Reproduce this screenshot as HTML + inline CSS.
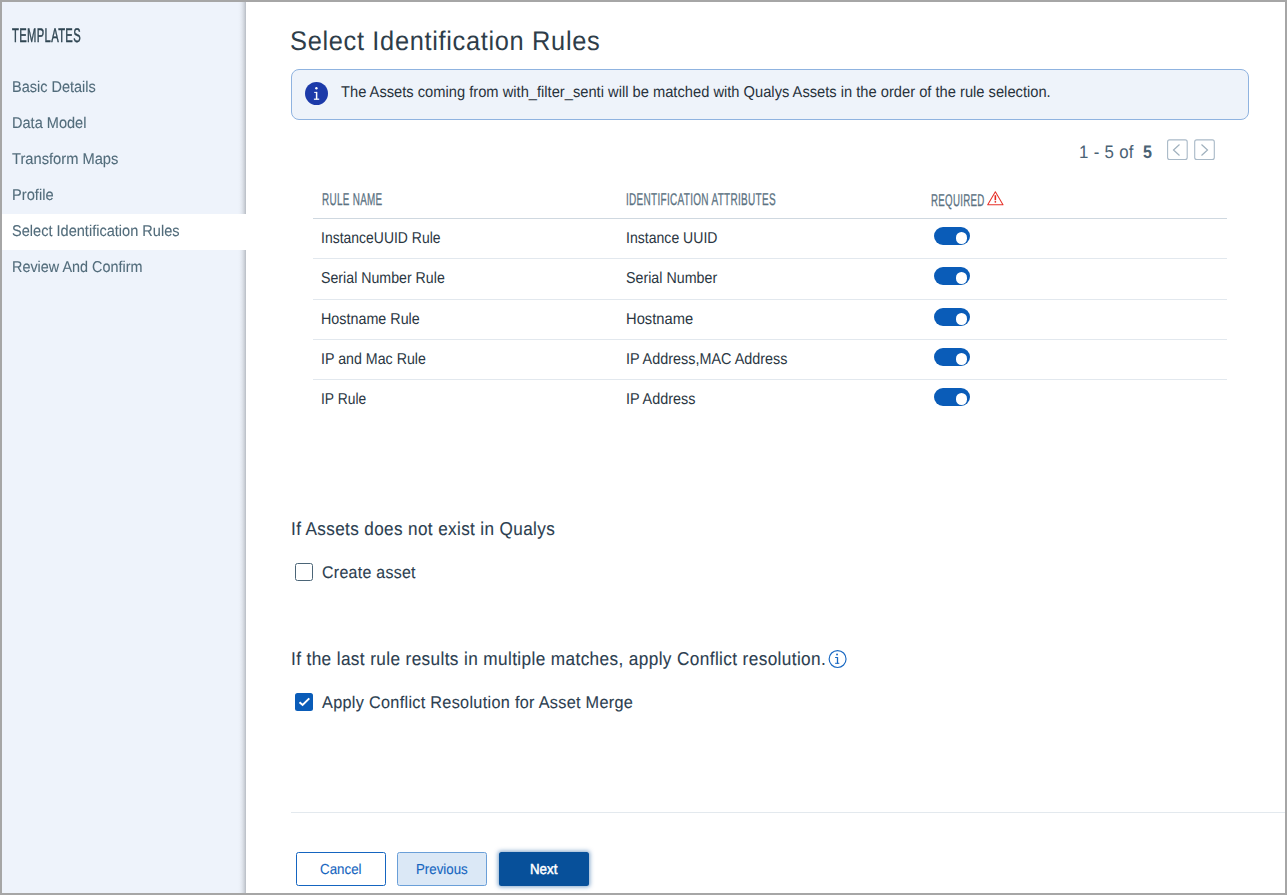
<!DOCTYPE html>
<html lang="en">
<head>
<meta charset="utf-8">
<title>Select Identification Rules</title>
<style>
*{box-sizing:border-box;margin:0;padding:0}
html,body{width:1287px;height:895px;overflow:hidden;background:#a6a6a6}
body{position:relative;font-family:"Liberation Sans",sans-serif}
.abs{position:absolute}
.t{position:absolute;display:block;white-space:pre;line-height:1;font-weight:400;font-style:normal;text-decoration:none;transform-origin:0 0}
#app{position:absolute;left:2px;top:2px;width:1283px;height:891px;background:#fff}
#side{position:absolute;left:2px;top:2px;width:244px;height:891px;background:#eef3fb}
#sideshadow{position:absolute;left:238px;top:2px;width:8px;height:891px;background:linear-gradient(to right,rgba(50,55,60,0) 0,rgba(50,55,60,.02) 25%,rgba(50,55,60,.07) 50%,rgba(50,55,60,.16) 75%,rgba(50,55,60,.29) 100%)}
#sidetext{position:absolute;left:0;top:0;width:246px;height:895px;will-change:transform}
#sel{position:absolute;left:2px;top:214px;width:244px;height:36px;background:#fff}
#infobox{position:absolute;left:291px;top:69px;width:958px;height:51px;background:#eef3fa;border:1px solid #8fb3e0;border-radius:8px}
#infoic{position:absolute;left:305px;top:82px;width:23px;height:23px;border-radius:50%;background:#1c3aa9}
.hl{position:absolute;left:313px;width:914px;height:1px}
.tog{position:absolute;left:934px;width:36px;height:18px;border-radius:9px;background:#0a5cb8}
.tog i{position:absolute;left:21.6px;top:5.2px;width:11.8px;height:11.8px;border-radius:50%;background:#fff}
.cb{position:absolute;left:295px;width:18px;height:18px;border-radius:2.5px}
.btn{position:absolute;top:852px;width:90px;height:34px;border-radius:2.5px}
#tpl{left:11.6px;top:25px;font-size:19.7px;color:#2f4552;letter-spacing:0.6px;-webkit-text-stroke:0.45px #2f4552;transform:translateY(0.83px) scaleX(0.5703) skewX(0.05deg);}
#n1{left:11.9px;top:79px;font-size:15.6px;color:#526c7b;-webkit-text-stroke:0.1px #526c7b;transform:scaleX(0.9295) skewX(0.05deg);}
#n2{left:12.1px;top:115px;font-size:15.6px;color:#526c7b;-webkit-text-stroke:0.1px #526c7b;transform:scaleX(0.9334) skewX(0.05deg);}
#n3{left:11.75px;top:151px;font-size:15.6px;color:#526c7b;-webkit-text-stroke:0.1px #526c7b;transform:scaleX(0.9419) skewX(0.05deg);}
#n4{left:11.85px;top:187px;font-size:15.6px;color:#526c7b;-webkit-text-stroke:0.1px #526c7b;transform:scaleX(0.9408) skewX(0.05deg);}
#n5{left:12.16px;top:223px;font-size:15.6px;color:#526c7b;-webkit-text-stroke:0.1px #526c7b;transform:scaleX(0.9336) skewX(0.05deg);}
#n6{left:11.85px;top:259px;font-size:15.6px;color:#526c7b;-webkit-text-stroke:0.1px #526c7b;transform:scaleX(0.9231) skewX(0.05deg);}
#title{left:290.19px;top:28.2px;font-size:27px;color:#2e3d49;letter-spacing:0.7px;transform:scaleX(0.9417) skewX(0.05deg);}
#info{left:340.82px;top:84.2px;font-size:15.7px;color:#28323c;transform:scaleX(0.9366) skewX(0.05deg);}
#pg1{left:1078.71px;top:143px;font-size:18px;color:#4a6274;letter-spacing:0.3px;transform:scaleX(0.9369) skewX(0.05deg);}
#pg2{left:1143.45px;top:143px;font-size:18px;color:#4a6274;font-weight:700;transform:scaleX(0.8925) skewX(0.05deg);}
#h1{left:321.9px;top:190.89px;font-size:17.0px;color:#5b7282;letter-spacing:0.5px;-webkit-text-stroke:0.3px #5b7282;transform:scaleX(0.5834) skewX(0.05deg);}
#h2{left:626.15px;top:190.89px;font-size:17.0px;color:#5b7282;letter-spacing:0.5px;-webkit-text-stroke:0.3px #5b7282;transform:scaleX(0.5886) skewX(0.05deg);}
#h3{left:930.85px;top:191.89px;font-size:17.0px;color:#5b7282;letter-spacing:0.5px;-webkit-text-stroke:0.3px #5b7282;transform:scaleX(0.5726) skewX(0.05deg);}
#r0a{left:321.46px;top:230px;font-size:15.8px;color:#2b3743;transform:scaleX(0.884) skewX(0.05deg);}
#r0b{left:625.95px;top:230px;font-size:15.8px;color:#2b3743;transform:scaleX(0.8908) skewX(0.05deg);}
#r1a{left:321.47px;top:270px;font-size:15.8px;color:#2b3743;transform:scaleX(0.898) skewX(0.05deg);}
#r1b{left:626.22px;top:270px;font-size:15.8px;color:#2b3743;transform:scaleX(0.9027) skewX(0.05deg);}
#r2a{left:321.23px;top:311px;font-size:15.8px;color:#2b3743;transform:scaleX(0.907) skewX(0.05deg);}
#r2b{left:625.94px;top:311px;font-size:15.8px;color:#2b3743;transform:scaleX(0.9322) skewX(0.05deg);}
#r3a{left:321.19px;top:351px;font-size:15.8px;color:#2b3743;transform:scaleX(0.9002) skewX(0.05deg);}
#r3b{left:625.9px;top:351px;font-size:15.8px;color:#2b3743;transform:scaleX(0.912) skewX(0.05deg);}
#r4a{left:321.21px;top:391px;font-size:15.8px;color:#2b3743;transform:scaleX(0.8768) skewX(0.05deg);}
#r4b{left:625.9px;top:391px;font-size:15.8px;color:#2b3743;transform:scaleX(0.9135) skewX(0.05deg);}
#s1{left:291.09px;top:520.2px;font-size:18.5px;color:#2c3e50;letter-spacing:0.4px;-webkit-text-stroke:0.1px #2c3e50;transform:scaleX(0.9266) skewX(0.05deg);}
#s2{left:291.07px;top:650.2px;font-size:18.5px;color:#2c3e50;letter-spacing:0.4px;-webkit-text-stroke:0.1px #2c3e50;transform:scaleX(0.931) skewX(0.05deg);}
#c1{left:322.15px;top:564px;font-size:17px;color:#2c3e50;letter-spacing:0.3px;-webkit-text-stroke:0.1px #2c3e50;transform:scaleX(0.9384) skewX(0.05deg);}
#c2{left:322.24px;top:694px;font-size:17px;color:#2c3e50;letter-spacing:0.3px;-webkit-text-stroke:0.1px #2c3e50;transform:scaleX(0.9572) skewX(0.05deg);}
#b1{left:320.28px;top:862.2px;font-size:14.5px;color:#1565c0;-webkit-text-stroke:0.12px #1565c0;transform:scaleX(0.9193) skewX(0.05deg);}
#b2{left:416.1px;top:862.2px;font-size:14.5px;color:#1565c0;-webkit-text-stroke:0.12px #1565c0;transform:scaleX(0.9163) skewX(0.05deg);}
#b3{left:529.9px;top:862.06px;font-size:14.7px;color:#ffffff;-webkit-text-stroke:0.5px #ffffff;transform:scaleX(0.9051) skewX(0.05deg);}
</style>
</head>
<body>
<main id="app"></main>
<aside id="side"></aside>
<div id="sideshadow"></div>
<div id="sel"></div>
<nav id="sidetext"><h2 class="t" id="tpl">TEMPLATES</h2><a class="t" id="n1">Basic Details</a><a class="t" id="n2">Data Model</a><a class="t" id="n3">Transform Maps</a><a class="t" id="n4">Profile</a><a class="t" id="n5">Select Identification Rules</a><a class="t" id="n6">Review And Confirm</a></nav>
<h1 class="t" id="title">Select Identification Rules</h1>
<div id="infobox" role="note"></div>
<div id="infoic"></div>
<svg class="abs" style="left:305px;top:82px" width="23" height="23" viewBox="0 0 23 23"><circle cx="11.4" cy="6.2" r="1.2" fill="#fff"/><path d="M9.2 10.4h2.6" fill="none" stroke="#fff" stroke-width="1"/><path d="M11.6 9.9v7.5" fill="none" stroke="#fff" stroke-width="1.5"/><path d="M8.9 17.2h5.3" fill="none" stroke="#fff" stroke-width="1.2"/></svg>
<p class="t" id="info">The Assets coming from with_filter_senti will be matched with Qualys Assets in the order of the rule selection.</p>
<span class="t" id="pg1">1 - 5 of</span><span class="t" id="pg2">5</span>
<svg class="abs" style="left:1160px;top:135px" width="60" height="30" viewBox="0 0 60 30"><rect x="7.6" y="4.9" width="19.6" height="19.6" rx="2" fill="#fff" stroke="#a9b9c7" stroke-width="1.1"/><rect x="34.7" y="4.9" width="19.6" height="19.6" rx="2" fill="#fff" stroke="#a9b9c7" stroke-width="1.1"/></svg>
<svg class="abs" style="left:1167px;top:140px" width="20" height="20" viewBox="0 0 20 20"><path d="M12.5 4.5L6.5 10l6 5.5" fill="none" stroke="#9fb0bd" stroke-width="1.2"/></svg>
<svg class="abs" style="left:1194px;top:140px" width="20" height="20" viewBox="0 0 20 20"><path d="M7.5 4.5l6 5.5-6 5.5" fill="none" stroke="#9fb0bd" stroke-width="1.2"/></svg>
<span class="t" id="h1">RULE NAME</span><span class="t" id="h2">IDENTIFICATION ATTRIBUTES</span><span class="t" id="h3">REQUIRED</span>
<svg class="abs" style="left:986px;top:189px" width="19" height="18" viewBox="0 0 19 18"><path d="M9.35 2.7L1.7 15.7h15.3z" fill="#fff" stroke="#e6332b" stroke-width="1.05" stroke-linejoin="round"/><path d="M9.35 6.2v5" stroke="#e6251d" stroke-width="1.6" fill="none"/><circle cx="9.35" cy="12.85" r="0.9" fill="#e6251d"/></svg>
<div class="hl" style="top:218px;background:#cfd8e0"></div>
<div class="hl" style="top:258px;background:#e2e8ee"></div>
<div class="hl" style="top:299px;background:#e2e8ee"></div>
<div class="hl" style="top:339px;background:#e2e8ee"></div>
<div class="hl" style="top:379px;background:#e2e8ee"></div>
<span class="t" id="r0a">InstanceUUID Rule</span><span class="t" id="r0b">Instance UUID</span><span class="t" id="r1a">Serial Number Rule</span><span class="t" id="r1b">Serial Number</span><span class="t" id="r2a">Hostname Rule</span><span class="t" id="r2b">Hostname</span><span class="t" id="r3a">IP and Mac Rule</span><span class="t" id="r3b">IP Address,MAC Address</span><span class="t" id="r4a">IP Rule</span><span class="t" id="r4b">IP Address</span>
<div class="tog" role="switch" aria-checked="true" style="top:227px"><i></i></div>
<div class="tog" role="switch" aria-checked="true" style="top:267px"><i></i></div>
<div class="tog" role="switch" aria-checked="true" style="top:308px"><i></i></div>
<div class="tog" role="switch" aria-checked="true" style="top:348px"><i></i></div>
<div class="tog" role="switch" aria-checked="true" style="top:388px"><i></i></div>
<h2 class="t" id="s1">If Assets does not exist in Qualys</h2>
<div class="cb" role="checkbox" aria-checked="false" style="top:563px;border:1px solid #4b6577;background:#fff"></div>
<label class="t" id="c1">Create asset</label>
<h2 class="t" id="s2">If the last rule results in multiple matches, apply Conflict resolution.</h2>
<svg class="abs" style="left:827px;top:649px" width="20" height="20" viewBox="0 0 20 20"><circle cx="10.6" cy="10" r="8.45" fill="#fff" stroke="#1767c2" stroke-width="1.15"/><circle cx="10.05" cy="5.5" r="0.95" fill="#1767c2"/><path d="M8.1 8.5h2.6" fill="none" stroke="#1767c2" stroke-width="1"/><path d="M10.5 8.2v6.4" fill="none" stroke="#1767c2" stroke-width="1.3"/><path d="M8.1 14.3h4.2" fill="none" stroke="#1767c2" stroke-width="1"/></svg>
<div class="cb" role="checkbox" aria-checked="true" style="top:693px;background:#0a5cb8"></div>
<svg class="abs" style="left:295px;top:693px" width="18" height="18" viewBox="0 0 18 18"><path d="M4.5 9.2l3.1 2.8 6.7-6.6" fill="none" stroke="#fff" stroke-width="2"/></svg>
<label class="t" id="c2">Apply Conflict Resolution for Asset Merge</label>
<div class="abs" style="left:291px;top:812px;width:994px;height:1px;background:#e3e9ee"></div>
<div class="btn" role="button" style="left:296px;background:#fff;border:1px solid #1565c0"></div>
<div class="btn" role="button" style="left:397px;background:#dbe8f6;border:1px solid #6a9fd8"></div>
<div class="btn" role="button" style="left:499px;background:#07509a;box-shadow:0 0 4px .5px rgba(7,80,154,.5)"></div>
<span class="t" id="b1">Cancel</span><span class="t" id="b2">Previous</span><span class="t" id="b3">Next</span>
</body>
</html>
